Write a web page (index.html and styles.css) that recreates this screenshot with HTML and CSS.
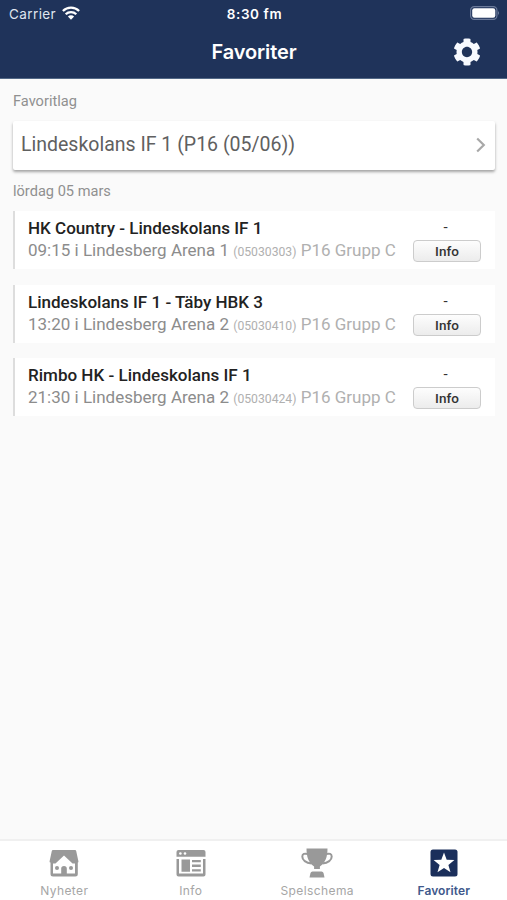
FILE: index.html
```html
<!DOCTYPE html>
<html lang="sv">

<head>
    <meta charset="UTF-8">
    <meta name="viewport" content="width=device-width, initial-scale=1.0">
    <title>Favoriter</title>
    <link rel="stylesheet" href="styles.css">
</head>

<body>
    <header class="header">
        <div class="status-bar">
            <div class="carrier">
                <span>Carrier</span>
                <svg class="wifi" viewBox="0 0 18 14">
                    <path d="M.9 5a11.6 11.6 0 0 1 16.2 0M3.7 8.2a7.6 7.6 0 0 1 10.6 0" fill="none" stroke="#fff" stroke-width="2.3" />
                    <path d="M5.9 10.5a4.4 4.4 0 0 1 6.2 0L9 13.7z" fill="#fff" />
                </svg>
            </div>
            <div class="clock">8:30 fm</div>
            <svg class="battery" viewBox="0 0 30 14">
                <rect x=".6" y=".6" width="26.3" height="12.8" rx="3.6" fill="none" stroke="#6b7a9a" stroke-width="1.2" />
                <rect x="2.2" y="2.2" width="23.1" height="9.6" rx="2.2" fill="#fff" />
                <path d="M28 4.8q1.8 2.2 0 4.4z" fill="#8190ad" />
            </svg>
        </div>
        <div class="nav-bar">
            <h1>Favoriter</h1>
            <svg class="settings" viewBox="0 0 512 512">
                <path d="M487.4 315.7l-42.6-24.6c4.3-23.2 4.3-47 0-70.2l42.6-24.6c4.9-2.8 7.1-8.6 5.5-14-11.1-35.6-30-67.8-54.7-94.6-3.8-4.1-10-5.1-14.8-2.3L380.8 110c-17.9-15.4-38.5-27.3-60.8-35.1V25.8c0-5.6-3.9-10.5-9.4-11.7-36.7-8.2-74.3-7.8-109.2 0-5.5 1.2-9.4 6.1-9.4 11.7V75c-22.2 7.9-42.8 19.8-60.8 35.1L88.7 85.5c-4.9-2.8-11-1.9-14.8 2.3-24.7 26.7-43.6 58.9-54.7 94.6-1.7 5.4.6 11.2 5.5 14L67.3 221c-4.3 23.2-4.3 47 0 70.2l-42.6 24.6c-4.9 2.8-7.1 8.6-5.5 14 11.1 35.6 30 67.8 54.7 94.6 3.8 4.1 10 5.1 14.8 2.3l42.6-24.6c17.9 15.4 38.5 27.3 60.8 35.1v49.2c0 5.6 3.9 10.5 9.4 11.7 36.7 8.2 74.3 7.8 109.2 0 5.5-1.2 9.4-6.1 9.4-11.7v-49.2c22.2-7.9 42.8-19.8 60.8-35.1l42.6 24.6c4.9 2.8 11 1.9 14.8-2.3 24.7-26.7 43.6-58.9 54.7-94.6 1.5-5.5-.7-11.3-5.6-14.1zM256 350c-52 0-94-42-94-94s42-94 94-94 94 42 94 94-42 94-94 94z" />
            </svg>
        </div>
    </header>

    <main class="content">
        <h2 class="section-title">Favoritlag</h2>
        <a class="team">
            <span>Lindeskolans IF 1 (P16 (05/06))</span>
            <svg class="chevron" viewBox="0 0 10 16">
                <path d="M1.2 1.5L7.8 8l-6.6 6.5" fill="none" stroke="#a8a8a8" stroke-width="2.2" />
            </svg>
        </a>

        <h2 class="section-title date">lördag 05 mars</h2>
        <div class="matches">
            <div class="match">
                <div class="match-text">
                    <h3>HK Country - Lindeskolans IF 1</h3>
                    <p>09:15 i Lindesberg Arena 1 <small>(05030303)</small> <span class="group">P16 Grupp C</span></p>
                </div>
                <div class="match-side">
                    <span class="score">-</span>
                    <button class="infoBtn">Info</button>
                </div>
            </div>
            <div class="match">
                <div class="match-text">
                    <h3>Lindeskolans IF 1 - Täby HBK 3</h3>
                    <p>13:20 i Lindesberg Arena 2 <small>(05030410)</small> <span class="group">P16 Grupp C</span></p>
                </div>
                <div class="match-side">
                    <span class="score">-</span>
                    <button class="infoBtn">Info</button>
                </div>
            </div>
            <div class="match">
                <div class="match-text">
                    <h3>Rimbo HK - Lindeskolans IF 1</h3>
                    <p>21:30 i Lindesberg Arena 2 <small>(05030424)</small> <span class="group">P16 Grupp C</span></p>
                </div>
                <div class="match-side">
                    <span class="score">-</span>
                    <button class="infoBtn">Info</button>
                </div>
            </div>
        </div>
    </main>

    <nav class="tabs">
        <a class="tab">
            <svg viewBox="0 0 32 32">
                <path d="M5 3h22q1 0 1.2 1l2.2 10.2q.2 1.200-.6 1.200V27q0 2.500-2.500 2.500H5q-2.500 0-2.500-2.500V15.400q-1.200 0-.9-1.200L3.800 4Q4 3 5 3z" />
                <path d="M16 8.500l8.500 8H27v10h-8.200v-5q0-2.500-2.800-2.500t-2.800 2.500v5H5v-10h2.500z" fill="#fff" />
                <circle cx="9" cy="21" r="2" />
                <circle cx="23" cy="21" r="2" />
            </svg>
            <span>Nyheter</span>
        </a>
        <a class="tab">
            <svg viewBox="0 0 32 32">
                <path d="M3.500 3h25q2 0 2 2v4.800h-29V5q0-2 2-2z" />
                <path d="M1.500 12H4v14.500h24V12h2.500v15.500q0 2-2 2h-25q-2 0-2-2z" />
                <path d="M6.500 12.500H15v12.300H6.500zM17 13h8.800v2.300H17zM17 17.600h8.800v2.300H17zM17 22.200h8.800v2.300H17z" />
                <circle cx="5.400" cy="6.500" r="1.300" fill="#fff" />
                <circle cx="10" cy="6.500" r="1.300" fill="#fff" />
            </svg>
            <span>Info</span>
        </a>
        <a class="tab">
            <svg viewBox="0 0 32 32">
                <path d="M5.500 1.500h21c0 8.500-2 14-7.600 18v2.600h-5.800v-2.600C7.500 15.500 5.500 10 5.500 1.500z" />
                <path d="M7 7Q1.500 5.600 1.300 9.500C1.200 13 5 16 10.500 16.500M25 7q5.500-1.400 5.700 2.500c.1 3.500-3.700 6.500-9.200 7" fill="none" stroke="#999" stroke-width="2" />
                <path d="M11.500 24.500h9q1.600 0 2 1.500l1 4.500h-15l1-4.500q.4-1.500 2-1.500z" />
            </svg>
            <span>Spelschema</span>
        </a>
        <a class="tab active">
            <svg viewBox="0 0 32 32">
                <rect x="2.500" y="2.500" width="27" height="27" rx="2.500" />
                <path d="M16 5.600l2.700 7.200 7.700.3-6 4.800 2.100 7.400-6.500-4.200-6.500 4.200 2.100-7.400-6-4.800 7.700-.3z" fill="#fff" />
            </svg>
            <span>Favoriter</span>
        </a>
    </nav>
</body>

</html>
```
FILE: styles.css
```css
* {
  margin: 0;
  padding: 0;
  box-sizing: border-box;
}

body {
  height: 100vh;
  display: flex;
  flex-direction: column;
  font-family: Roboto, sans-serif;
  background-color: #fafafa;
  overflow: hidden;
}

.header {
  height: 79px;
  background-color: #1f335a;
  border-bottom: 1px solid #526886;
  color: #ffffff;
  font-family: Inter, sans-serif;
}

.status-bar {
  height: 26px;
  padding: 0 7px 0 9px;
  display: grid;
  grid-template-columns: 1fr auto 1fr;
  align-items: center;
}

.carrier {
  display: flex;
  align-items: center;
  gap: 6px;
  color: #dfe5ee;
  font-size: 13.5px;
  letter-spacing: 0.4px;
}

.carrier span,
.clock {
  padding-top: 2px;
}

.wifi {
  width: 18px;
  height: 14px;
}

.clock {
  font-size: 13.5px;
  font-weight: 600;
  letter-spacing: 0.6px;
}

.battery {
  width: 30px;
  height: 14px;
  justify-self: end;
}

.nav-bar {
  height: 52px;
  padding: 0 26px 0 27px;
  display: grid;
  grid-template-columns: 1fr auto 1fr;
  align-items: center;
}

.nav-bar h1 {
  grid-column: 2;
  font-size: 20px;
  font-weight: 600;
  letter-spacing: -0.1px;
}

.settings {
  width: 28px;
  height: 28px;
  justify-self: end;
  fill: #f7faff;
}

.content {
  flex: 1;
  padding: 13px 12px 0 13px;
}

.section-title {
  font-size: 14.6px;
  line-height: 18px;
  font-weight: 400;
  color: #909090;
}

.team {
  height: 49px;
  margin-top: 11px;
  padding: 0 9px 2px 8px;
  display: flex;
  align-items: center;
  justify-content: space-between;
  background-color: #ffffff;
  border-radius: 2px;
  box-shadow: 0 2px 3px rgba(0, 0, 0, 0.35);
  color: #606060;
  font-size: 19.5px;
}

.chevron {
  width: 10px;
  height: 16px;
}

.date {
  margin-top: 12px;
}

.matches {
  margin-top: 11.3px;
  display: flex;
  flex-direction: column;
  gap: 15.4px;
}

.match {
  height: 58px;
  padding: 6px 14px 0 13px;
  display: flex;
  justify-content: space-between;
  background-color: #ffffff;
  border-left: 2px solid #dddddd;
}

.match h3 {
  font-size: 17.05px;
  line-height: 22px;
  font-weight: 500;
  color: #222222;
}

.match p {
  font-size: 17px;
  line-height: 22px;
  color: #8c8c8c;
  white-space: nowrap;
}

.match small {
  font-size: 12.2px;
  color: #b0b0b0;
}

.group {
  color: #b0b0b0;
}

.match-side {
  width: 68px;
  display: flex;
  flex-direction: column;
  align-items: center;
}

.score {
  height: 23px;
  padding-right: 3px;
  font-size: 15px;
  line-height: 20px;
  color: #333333;
}

.infoBtn {
  width: 68px;
  height: 22px;
  border: 1px solid #cccccc;
  border-radius: 4px;
  background: linear-gradient(#fdfdfd, #ececec);
  font-family: Roboto, sans-serif;
  font-size: 13.5px;
  font-weight: 500;
  color: #333333;
}

.tabs {
  height: 61px;
  padding: 6px 0 0 1px;
  display: flex;
  background-color: #ffffff;
  border-top: 2px solid #f0f0f0;
}

.tab {
  flex: 1;
  display: flex;
  flex-direction: column;
  align-items: center;
  gap: 5px;
  font-family: Inter, sans-serif;
  font-size: 12px;
  line-height: 14px;
  letter-spacing: 0.4px;
  color: #a6a6a6;
}

.tab svg {
  width: 32px;
  height: 32px;
  fill: #999999;
}

.tab.active {
  color: #41598c;
  font-weight: 600;
  letter-spacing: 0.1px;
}

.tab.active svg {
  fill: #1b2f5b;
}
```
